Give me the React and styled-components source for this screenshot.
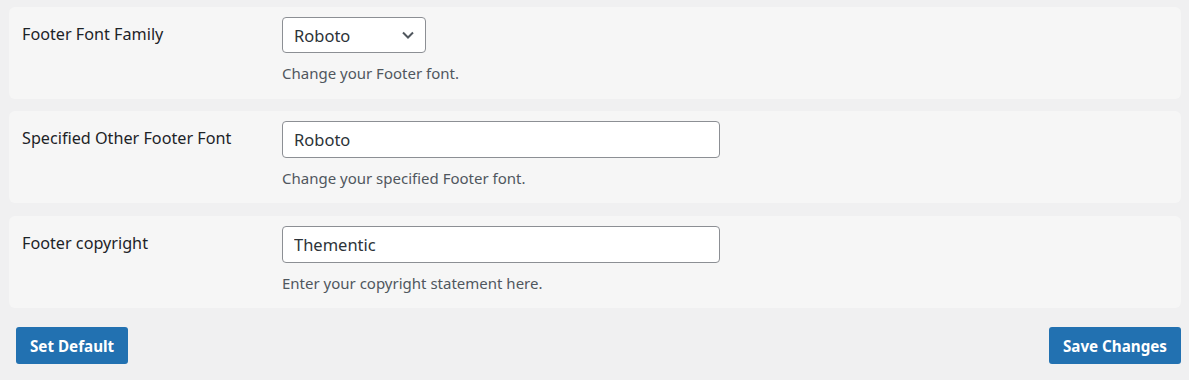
import React from 'react';
import styled, { createGlobalStyle } from 'styled-components';

const GlobalStyle = createGlobalStyle`
  body {
    margin: 0;
    background: #f0f0f1;
    font-family: 'Noto Sans', 'Open Sans', sans-serif;
    color: #1d2327;
  }
`;

const Page = styled.div`
  padding: 7px 8px 16px 9px;
  display: flex;
  flex-direction: column;
  gap: 12.4px;
`;

const Card = styled.div`
  background: #f6f6f6;
  border-radius: 6px;
  padding: 10px 13px 16px 13px;
  display: grid;
  grid-template-columns: 260px 1fr;
  height: 92px;
  box-sizing: border-box;
`;

const Label = styled.div`
  font-size: 16.2px;
  line-height: 22px;
  padding-top: 6px;
  color: #1d2327;
`;

const Field = styled.div`
  display: flex;
  flex-direction: column;
  align-items: flex-start;
`;

const SelectBox = styled.div`
  width: 144px;
  height: 36px;
  box-sizing: border-box;
  border: 1px solid #8c8f94;
  border-radius: 4px;
  background: #fff;
  display: flex;
  align-items: center;
  justify-content: space-between;
  padding: 0 11px 0 11px;
  font-size: 16.5px;
  color: #2c3338;
`;

const Input = styled.input`
  width: 438px;
  height: 37px;
  box-sizing: border-box;
  border: 1px solid #8c8f94;
  border-radius: 4px;
  background: #fff;
  padding: 0 11px;
  font-family: inherit;
  font-size: 16.5px;
  color: #2c3338;
  outline: none;
`;

const Description = styled.p`
  margin: 10px 0 0;
  font-size: 15px;
  line-height: 20px;
  color: #50575e;
`;

const Actions = styled.div`
  display: flex;
  justify-content: space-between;
  padding: 7px 0 0 7px;
`;

const Button = styled.button`
  height: 37px;
  padding: 0 14px;
  border: none;
  border-radius: 3px;
  background: #2271b1;
  color: #fff;
  font-family: inherit;
  font-weight: 700;
  font-size: 15.2px;
  cursor: pointer;
`;

const Chevron = () => (
  <svg width="12" height="8" viewBox="0 0 12 8" fill="none">
    <path d="M1 1.5 L6 6.5 L11 1.5" stroke="#50575e" strokeWidth="2" />
  </svg>
);

const rows = [
  { label: 'Footer Font Family', select: 'Roboto', desc: 'Change your Footer font.' },
  { label: 'Specified Other Footer Font', value: 'Roboto', desc: 'Change your specified Footer font.' },
  { label: 'Footer copyright', value: 'Thementic', desc: 'Enter your copyright statement here.' },
];

export default function App() {
  return (
    <>
      <GlobalStyle />
      <Page>
        {rows.map((r) => (
          <Card key={r.label}>
            <Label>{r.label}</Label>
            <Field>
              {r.select ? (
                <SelectBox>
                  <span>{r.select}</span>
                  <Chevron />
                </SelectBox>
              ) : (
                <Input defaultValue={r.value} />
              )}
              <Description>{r.desc}</Description>
            </Field>
          </Card>
        ))}
        <Actions>
          <Button>Set Default</Button>
          <Button>Save Changes</Button>
        </Actions>
      </Page>
    </>
  );
}
